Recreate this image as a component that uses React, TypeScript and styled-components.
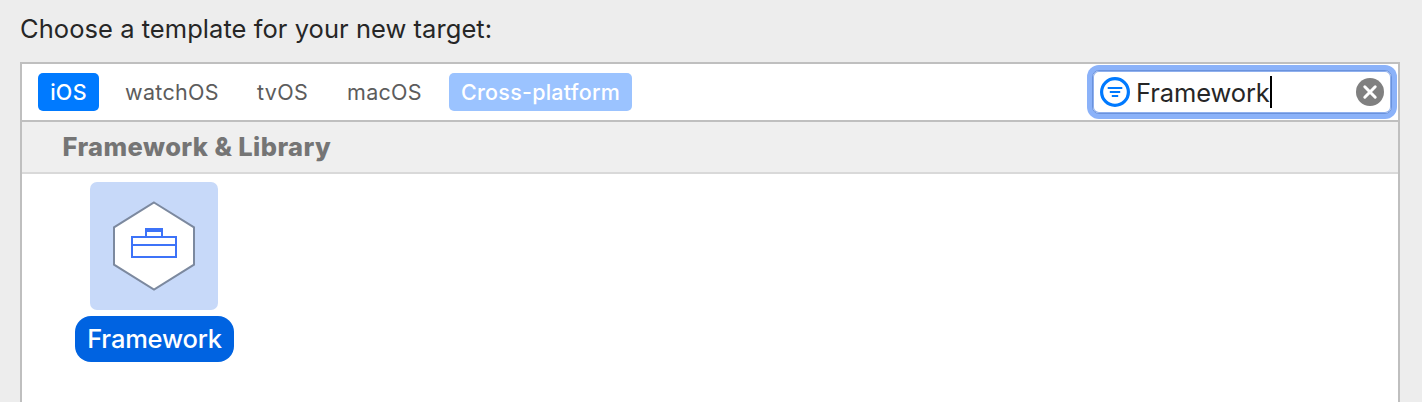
import React from 'react';
import styled, { createGlobalStyle } from 'styled-components';

const GlobalStyle = createGlobalStyle`
  * { box-sizing: border-box; }
  body {
    margin: 0;
    background: #ededed;
    font-family: Inter, "Liberation Sans", sans-serif;
    -webkit-font-smoothing: antialiased;
    overflow: hidden;
  }
`;

const Sheet = styled.main`
  display: flex;
  flex-direction: column;
  height: 402px;
  padding: 0 22px 0 20px;
  overflow: hidden;
`;

const Prompt = styled.h1`
  flex: none;
  margin: 0;
  height: 62px;
  padding-top: 13px;
  font-size: 25.5px;
  font-weight: 400;
  line-height: 32px;
  letter-spacing: 0.05px;
  color: #262626;
  white-space: nowrap;
`;

const Panel = styled.section`
  flex: 1;
  border: 2px solid #bfbfbf;
  border-bottom: 0;
  background: #fff;
`;

const FilterBar = styled.div`
  display: flex;
  align-items: center;
  justify-content: space-between;
  height: 58px;
  padding: 0 6px 2px 16px;
  border-bottom: 2px solid #bfbfbf;
`;

const Tabs = styled.nav`
  display: flex;
  gap: 15px;
  padding-top: 2px;
`;

const tones = {
  plain: { background: 'transparent', color: '#5c5c5c', weight: 400 },
  active: { background: '#007aff', color: '#ffffff', weight: 500 },
  faded: { background: '#9bc3ff', color: '#ffffff', weight: 500 },
};

const Tab = styled.button<{ $tone: keyof typeof tones; $width: number; $spacing: number }>`
  display: flex;
  align-items: center;
  justify-content: center;
  width: ${(p) => p.$width}px;
  height: 38px;
  padding: 0;
  border: 0;
  border-radius: 5px;
  background: ${(p) => tones[p.$tone].background};
  color: ${(p) => tones[p.$tone].color};
  font-family: inherit;
  font-size: 21.5px;
  font-weight: ${(p) => tones[p.$tone].weight};
  letter-spacing: ${(p) => p.$spacing}px;
  white-space: nowrap;
`;

const SearchField = styled.div`
  display: flex;
  align-items: center;
  width: 300px;
  height: 44px;
  margin-top: 2px;
  padding: 0 7px;
  border: 1px solid #6a92dc;
  border-radius: 7px;
  background: #fff;
  box-shadow: 0 0 0 5px #8bb2f9, inset 0 0 0 1px #8fb0ee;
`;

const Query = styled.span`
  width: 134px;
  margin-left: 6px;
  padding-top: 1px;
  font-size: 25.5px;
  line-height: 32px;
  letter-spacing: -0.1px;
  color: #262626;
  white-space: nowrap;
`;

const Caret = styled.span`
  width: 2px;
  height: 32px;
  margin-right: auto;
  background: #000;
`;

const SectionTitle = styled.h2`
  margin: 0;
  height: 52px;
  padding-left: 40.5px;
  border-bottom: 2px solid #d9d9d9;
  background: #efefef;
  font-size: 25.5px;
  font-weight: 800;
  line-height: 50px;
  letter-spacing: 0.42px;
  color: #757575;
  white-space: nowrap;
`;

const Templates = styled.div`
  display: flex;
  padding: 8px 53px;
`;

const Template = styled.div`
  display: flex;
  flex-direction: column;
  align-items: center;
  gap: 6px;
  width: 159px;
`;

const Tile = styled.div`
  width: 128px;
  height: 128px;
  border-radius: 7px;
  background: #c7d9f9;
  margin-right: 1px;
`;

const TemplateName = styled.span`
  width: 159px;
  height: 46px;
  border-radius: 16px;
  background: #0063e1;
  color: #fff;
  font-size: 25.5px;
  font-weight: 500;
  line-height: 46px;
  letter-spacing: -0.2px;
  text-align: center;
`;

const FilterIcon = () => (
  <svg width="30" height="30" viewBox="0 0 30 30" fill="none" stroke="#007aff">
    <circle cx="15" cy="15" r="13.4" strokeWidth="3.2" />
    <path d="M7.7 11h14.6M9.8 15h10.4M11.8 19h6.4" strokeWidth="2" />
  </svg>
);

const ClearIcon = () => (
  <svg width="28" height="28" viewBox="0 0 28 28">
    <circle cx="14" cy="14" r="14" fill="#808080" />
    <path d="M8.8 8.8l10.4 10.4M19.2 8.8L8.8 19.2" stroke="#fff" strokeWidth="3" strokeLinecap="round" />
  </svg>
);

const ToolboxIcon = () => (
  <svg width="128" height="128" viewBox="0 0 128 128">
    <path d="M64 20.5L104 45.3V82.7L64 107.5L24 82.7V45.3Z" fill="#fff" stroke="#7c899f" strokeWidth="2" />
    <g fill="none" stroke="#3d73f8" strokeWidth="2">
      <path d="M42 55H86V75H42ZM42 63H86M56 54V47M72 54V47" />
      <path d="M55 48H73" strokeWidth="4" />
    </g>
  </svg>
);

export default function App() {
  return (
    <>
      <GlobalStyle />
      <Sheet>
        <Prompt>Choose a template for your new target:</Prompt>
        <Panel>
          <FilterBar>
            <Tabs>
              <Tab $tone="active" $width={61} $spacing={0.3}>iOS</Tab>
              <Tab $tone="plain" $width={116} $spacing={0.3}>watchOS</Tab>
              <Tab $tone="plain" $width={75} $spacing={0.3}>tvOS</Tab>
              <Tab $tone="plain" $width={99} $spacing={0.3}>macOS</Tab>
              <Tab $tone="faded" $width={183} $spacing={0.25}>Cross-platform</Tab>
            </Tabs>
            <SearchField>
              <FilterIcon />
              <Query>Framework</Query>
              <Caret />
              <ClearIcon />
            </SearchField>
          </FilterBar>
          <SectionTitle>Framework &amp; Library</SectionTitle>
          <Templates>
            <Template>
              <Tile>
                <ToolboxIcon />
              </Tile>
              <TemplateName>Framework</TemplateName>
            </Template>
          </Templates>
        </Panel>
      </Sheet>
    </>
  );
}
